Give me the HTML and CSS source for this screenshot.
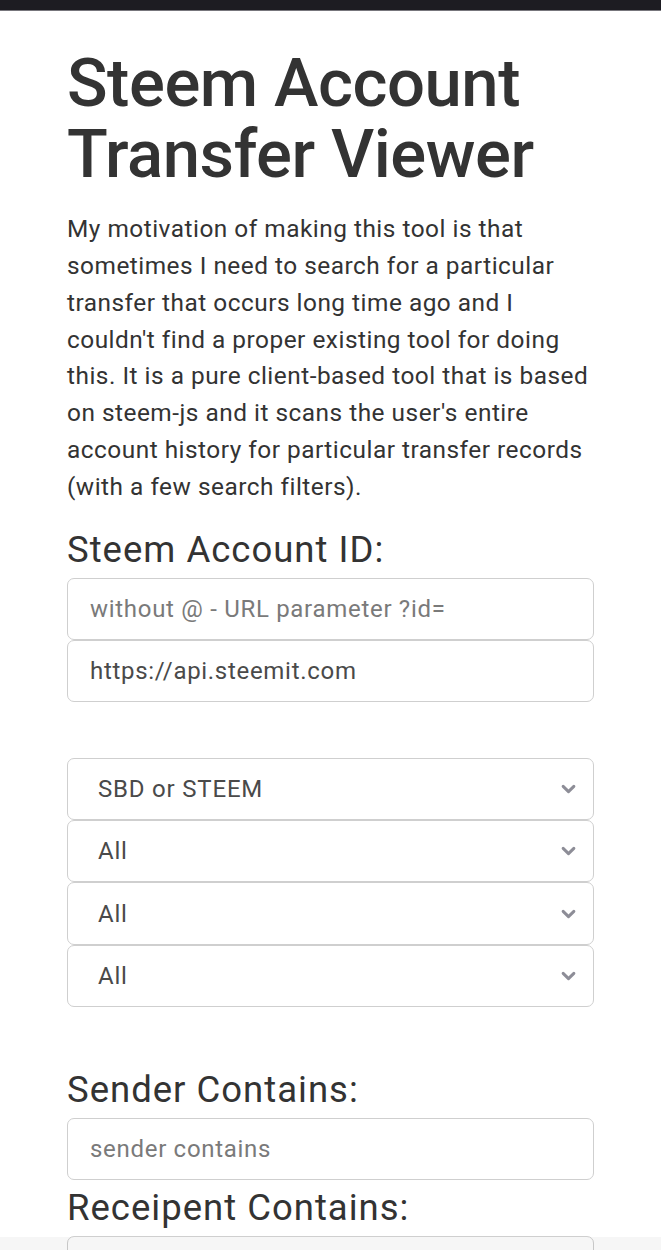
FILE: index.html
```html
<!DOCTYPE html>
<html lang="en">
<head>
<meta charset="utf-8">
<title>Steem Account Transfer Viewer</title>
<link rel="stylesheet" href="styles.css">
</head>
<body>
<div class="statusbar"></div>
<main class="container">
  <h1 class="title">Steem Account Transfer Viewer</h1>
  <p class="intro">My motivation of making this tool is that sometimes I need to search for a particular transfer that occurs long time ago and I couldn't find a proper existing tool for doing this. It is a pure client-based tool that is based on steem-js and it scans the user's entire account history for particular transfer records (with a few search filters).</p>

  <div class="group">
    <label class="label" for="id">Steem Account ID:</label>
    <input class="field" id="id" type="text" placeholder="without @ - URL parameter ?id=">
    <input class="field" id="api" type="text" value="https://api.steemit.com">
  </div>

  <div class="group selects">
    <div class="select"><span>SBD or STEEM</span><svg class="chev" viewBox="0 0 14 9" width="15" height="10"><path d="M2 2 L7 7 L12 2" fill="none" stroke="#8d8d97" stroke-width="2.8" stroke-linecap="round" stroke-linejoin="round"/></svg></div>
    <div class="select"><span>All</span><svg class="chev" viewBox="0 0 14 9" width="15" height="10"><path d="M2 2 L7 7 L12 2" fill="none" stroke="#8d8d97" stroke-width="2.8" stroke-linecap="round" stroke-linejoin="round"/></svg></div>
    <div class="select"><span>All</span><svg class="chev" viewBox="0 0 14 9" width="15" height="10"><path d="M2 2 L7 7 L12 2" fill="none" stroke="#8d8d97" stroke-width="2.8" stroke-linecap="round" stroke-linejoin="round"/></svg></div>
    <div class="select"><span>All</span><svg class="chev" viewBox="0 0 14 9" width="15" height="10"><path d="M2 2 L7 7 L12 2" fill="none" stroke="#8d8d97" stroke-width="2.8" stroke-linecap="round" stroke-linejoin="round"/></svg></div>
  </div>

  <div class="group sender">
    <label class="label" for="sender">Sender Contains:</label>
    <input class="field" id="sender" type="text" placeholder="sender contains">
  </div>

  <div class="group receiver">
    <label class="label" for="to">Receipent Contains:</label>
    <input class="field" id="to" type="text" placeholder="receipent contains">
  </div>
</main>
<div class="navshade"></div>
</body>
</html>
```

FILE: styles.css
```css
html, body {
  margin: 0;
  padding: 0;
  background: #ffffff;
}

body {
  font-family: Roboto, "Liberation Sans", sans-serif;
  color: #333333;
}

.statusbar {
  height: 10px;
  background: #1d1c22;
  border-bottom: 1px solid #77767c;
}

.container {
  padding: 37px 67px 0 67px;
}

.title {
  font-size: 67px;
  font-weight: 500;
  line-height: 71px;
  margin: 0;
  color: #333333;
  letter-spacing: -0.45px;
}

.intro {
  margin: 21px 0 0 0;
  font-size: 24.4px;
  line-height: 36.86px;
  letter-spacing: 0.5px;
  color: #333333;
}

.group {
  display: flex;
  flex-direction: column;
}

.label {
  display: block;
  font-size: 36.5px;
  line-height: 42px;
  font-weight: 400;
  letter-spacing: 1px;
  margin: 23px 0 7px 0;
  color: #333333;
}

.field {
  box-sizing: border-box;
  height: 62px;
  width: 100%;
  margin: 0;
  border: 1.5px solid #cfcfcf;
  border-radius: 7px;
  padding: 0 22px;
  font-family: Roboto, "Liberation Sans", sans-serif;
  font-size: 24px;
  letter-spacing: 0.7px;
  color: #4a4a4a;
  background: #ffffff;
  outline: none;
}

.field::placeholder {
  color: #7a7a7a;
}

.selects {
  margin-top: 56px;
}

.select {
  box-sizing: border-box;
  height: 62.3px;
  border: 1.5px solid #cfcfcf;
  border-radius: 7px;
  padding: 0 17px 0 30px;
  display: flex;
  align-items: center;
  justify-content: space-between;
  font-size: 24px;
  letter-spacing: 0.8px;
  color: #4a4a4a;
}

.chev {
  display: block;
}

.sender .label {
  margin-top: 62px;
}

.receiver .label {
  margin-top: 7px;
  margin-bottom: 7px;
}

.navshade {
  position: fixed;
  left: 0;
  right: 0;
  bottom: 0;
  height: 13px;
  background: rgba(0, 0, 0, 0.035);
}
```
